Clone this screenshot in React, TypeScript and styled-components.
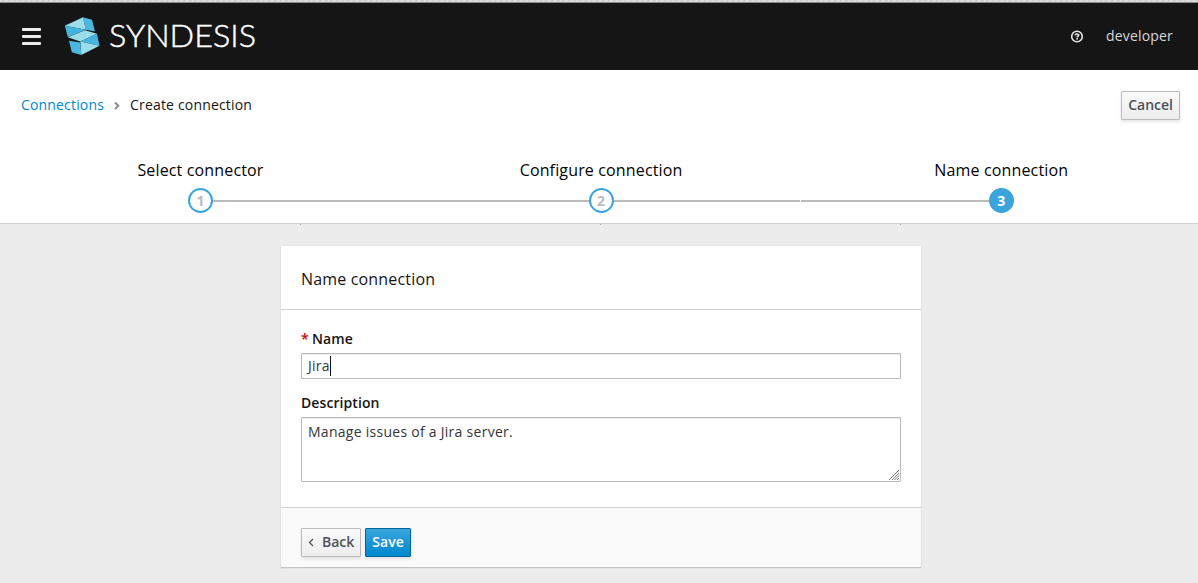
import React from "react";
import styled, { createGlobalStyle, css } from "styled-components";

const GlobalStyle = createGlobalStyle`
  * { box-sizing: border-box; }
  body {
    margin: 0;
    background: #ececec;
    font-family: "Open Sans", "Noto Sans", sans-serif;
    font-size: 14px;
    line-height: 20px;
    color: #151515;
  }
  button, textarea { font-family: inherit; }
`;

const Page = styled.div`
  display: flex;
  flex-direction: column;
  height: 583px;
  overflow: hidden;
`;

const WindowEdge = styled.div`
  height: 3px;
  flex: none;
  border-bottom: 1px solid #8a8a8a;
  background: repeating-linear-gradient(135deg, #dcdcdc 0 2px, #cfd0d2 2px 4px);
`;

const Masthead = styled.header`
  display: flex;
  align-items: center;
  flex: none;
  height: 67px;
  padding: 0 25px 1px 22px;
  background: #151515;
  color: #d8d8d8;
`;

const MenuButton = styled.div`
  display: flex;
  flex-direction: column;
  gap: 4px;
  width: 19px;
  margin: 0 23px 0 0;
`;

const MenuBar = styled.span`
  height: 3px;
  border-radius: 1px;
  background: #ededed;
`;

const Brand = styled.svg`
  display: block;
`;

const UserTools = styled.div`
  display: flex;
  align-items: center;
  gap: 22px;
  margin-left: auto;
`;

const UserName = styled.span`
  padding-bottom: 1px;
  letter-spacing: 0.17px;
`;

const Top = styled.section`
  flex: none;
  height: 154px;
  background: #fff;
  border-bottom: 1px solid #d1d1d1;
`;

const Toolbar = styled.div`
  display: flex;
  align-items: center;
  justify-content: space-between;
  height: 71px;
  padding: 0 18px 0 21px;
`;

const Breadcrumb = styled.nav`
  display: flex;
  align-items: center;
  gap: 10px;
  padding-bottom: 2px;
  letter-spacing: 0.17px;
`;

const CrumbLink = styled.a`
  color: #0088ce;
`;

const Button = styled.button<{ $primary?: boolean }>`
  display: flex;
  align-items: center;
  justify-content: center;
  height: 29px;
  padding: 0 6px 2px;
  border: 1px solid #bbb;
  border-radius: 1px;
  background: linear-gradient(#fafafa, #ededed);
  box-shadow: 0 2px 3px rgba(3, 3, 3, 0.1);
  color: #4d5258;
  font-size: 14px;
  font-weight: 600;
  line-height: 20px;
  ${(p) =>
    p.$primary &&
    css`
      border-color: #00659c;
      background: linear-gradient(#39a5dc, #0088ce);
      color: #fff;
    `}
`;

const Steps = styled.ol`
  display: flex;
  width: 1202px;
  margin: 17px 0 0;
  padding: 0;
  list-style: none;
`;

const Step = styled.li`
  display: flex;
  flex: 0 0 400.2px;
  flex-direction: column;
  align-items: center;
  &:first-child {
    flex-basis: 401px;
  }
`;

const StepTitle = styled.span`
  color: #030303;
  font-size: 16px;
  letter-spacing: 0.15px;
  line-height: 24px;
`;

const Track = styled.div`
  display: flex;
  align-items: center;
  width: 100%;
  height: 25px;
  margin-top: 6px;
`;

const Line = styled.span<{ $hidden?: boolean; $gap?: boolean }>`
  flex: 1;
  height: 2px;
  box-shadow: ${(p) => (p.$gap ? "inset -1px 0 #fff" : "none")};
  background: ${(p) => (p.$hidden ? "transparent" : "#bbb")};
`;

const StepNumber = styled.span<{ $active?: boolean }>`
  display: flex;
  align-items: center;
  justify-content: center;
  width: 25px;
  height: 25px;
  border: 2px solid #39a5dc;
  border-radius: 50%;
  background: ${(p) => (p.$active ? "#39a5dc" : "#fff")};
  color: ${(p) => (p.$active ? "#fff" : "#bbb")};
  font-size: 14px;
  font-weight: 700;
`;

const Ticks = styled.div`
  display: flex;
  justify-content: space-between;
  flex: none;
  width: 601px;
  height: 1px;
  margin-left: 300px;
`;

const Tick = styled.i`
  width: 1px;
  height: 1px;
  background: #aaa;
`;

const Card = styled.section`
  width: 640px;
  flex: none;
  margin: 21px 0 0 281px;
  background: #fff;
  box-shadow: 0 1px 1px #c4c4c4, 0 0 2px rgba(3, 3, 3, 0.07);
`;

const CardHeader = styled.h2`
  height: 64px;
  margin: 0;
  padding: 21px 20px 0;
  border-bottom: 1px solid #d1d1d1;
  font-size: 16px;
  font-weight: 400;
  letter-spacing: 0.17px;
  line-height: 24px;
`;

const CardBody = styled.div`
  height: 198px;
  padding: 19px 20px 0;
  border-bottom: 1px solid #d1d1d1;
`;

const Label = styled.div`
  height: 24px;
  font-weight: 600;
  letter-spacing: 0.08px;
`;

const Required = styled.span`
  color: #c00;
  margin-right: -0.5px;
`;

const fieldBox = css`
  display: block;
  width: 600px;
  border: 1px solid #bbb;
  border-radius: 1px;
  background: #fff;
  box-shadow: inset 0 1px 1px rgba(3, 3, 3, 0.075);
  color: #363636;
  font-size: 14px;
  letter-spacing: 0.27px;
`;

const TextField = styled.div`
  ${fieldBox}
  display: flex;
  align-items: center;
  height: 26px;
  margin-bottom: 14px;
  padding: 0 6px;
`;

const Caret = styled.i`
  width: 1px;
  height: 20px;
  background: #111;
`;

const TextAreaWrap = styled.div`
  position: relative;
  width: 600px;
`;

const ResizeGrip = styled.svg`
  position: absolute;
  right: 1px;
  bottom: 1px;
`;

const TextArea = styled.textarea`
  ${fieldBox}
  height: 65px;
  padding: 4px 6px;
  line-height: 20px;
  outline: none;
  resize: none;
`;

const CardFooter = styled.footer`
  display: flex;
  gap: 4px;
  height: 59px;
  padding: 20px 20px 0;
  background: #fafafa;
`;

const Logo = () => (
  <Brand width="194" height="44" viewBox="64 14 194 44" role="img" aria-label="Syndesis">
    <path d="M83 17.2L92 19.8L95 31.5L85.8 29.8Z" fill="#4ab7de" />
    <path d="M83 17.2L85.8 29.8L64.8 25.8Z" fill="#9bdde8" />
    <path d="M64.8 25.8L85.8 29.8L67.8 37Z" fill="#44b5df" />
    <path d="M67.8 37.2L85 30.2L97 33.8L80.3 41.4Z" fill="#9bdde8" />
    <path d="M97 33.8L99.5 45.8L80.3 41.4Z" fill="#44b5df" />
    <path d="M80.3 41.4L99.5 45.8L81.3 55Z" fill="#9bdde8" />
    <path d="M69 40.8L80.3 42.6L81.3 55L71.8 52.3Z" fill="#4ab7de" />
    <text
      x="109"
      y="47"
      textLength="147"
      lengthAdjust="spacingAndGlyphs"
      fill="#fff"
      stroke="#fff"
      strokeWidth=".45"
      fontFamily="Lato"
      fontWeight="300"
      fontSize="31"
    >
      SYNDESIS
    </text>
  </Brand>
);

const HelpIcon = () => (
  <svg width="14" height="14" viewBox="0 0 14 14" fill="none" stroke="#e4e4e4">
    <circle cx="7" cy="7.5" r="5.3" strokeWidth="1.6" />
    <path d="M5.1 6.3C5.4 4.5 8.9 4.7 8.7 6.3C8.6 7.2 7.2 7.2 7.1 8.4" strokeWidth="1.6" />
    <path d="M7.1 9.1V10.6" strokeWidth="1.7" />
  </svg>
);

const ChevronRight = () => (
  <svg width="6" height="10" viewBox="0 0 6 10" fill="none" stroke="#8b8d8f" strokeWidth="2">
    <path d="M1 2.5L4.3 5.8L1 9.1" />
  </svg>
);

const BackChevron = styled.svg`
  margin-right: 8px;
`;

const ChevronLeft = () => (
  <BackChevron width="6" height="10" viewBox="0 0 6 10" fill="none" stroke="#4d5258" strokeWidth="1.3">
    <path d="M5 2L1.5 5.5L5 9" />
  </BackChevron>
);

const steps = ["Select connector", "Configure connection", "Name connection"];

export default function App() {
  return (
    <Page>
      <GlobalStyle />
      <WindowEdge />
      <Masthead>
        <MenuButton>
          <MenuBar />
          <MenuBar />
          <MenuBar />
        </MenuButton>
        <Logo />
        <UserTools>
          <HelpIcon />
          <UserName>developer</UserName>
        </UserTools>
      </Masthead>
      <Top>
        <Toolbar>
          <Breadcrumb>
            <CrumbLink>Connections</CrumbLink>
            <ChevronRight />
            <span>Create connection</span>
          </Breadcrumb>
          <Button>Cancel</Button>
        </Toolbar>
        <Steps>
          {steps.map((title, i) => (
            <Step key={title}>
              <StepTitle>{title}</StepTitle>
              <Track>
                <Line $hidden={i === 0} />
                <StepNumber $active={i === 2}>{i + 1}</StepNumber>
                <Line $hidden={i === 2} $gap={i === 1} />
              </Track>
            </Step>
          ))}
        </Steps>
      </Top>
      <Ticks>
        <Tick />
        <Tick />
        <Tick />
      </Ticks>
      <Card>
        <CardHeader>Name connection</CardHeader>
        <CardBody>
          <Label>
            <Required>*</Required> Name
          </Label>
          <TextField>
            Jira
            <Caret />
          </TextField>
          <Label>Description</Label>
          <TextAreaWrap>
            <TextArea defaultValue="Manage issues of a Jira server." spellCheck={false} />
            <ResizeGrip width="12" height="12" viewBox="0 0 12 12" stroke="#777" strokeWidth="1">
              <path d="M1 11L11 1M4 11L11 4M6.5 11L11 6.5M9 11L11 9" />
            </ResizeGrip>
          </TextAreaWrap>
        </CardBody>
        <CardFooter>
          <Button>
            <ChevronLeft />
            Back
          </Button>
          <Button $primary>Save</Button>
        </CardFooter>
      </Card>
    </Page>
  );
}
